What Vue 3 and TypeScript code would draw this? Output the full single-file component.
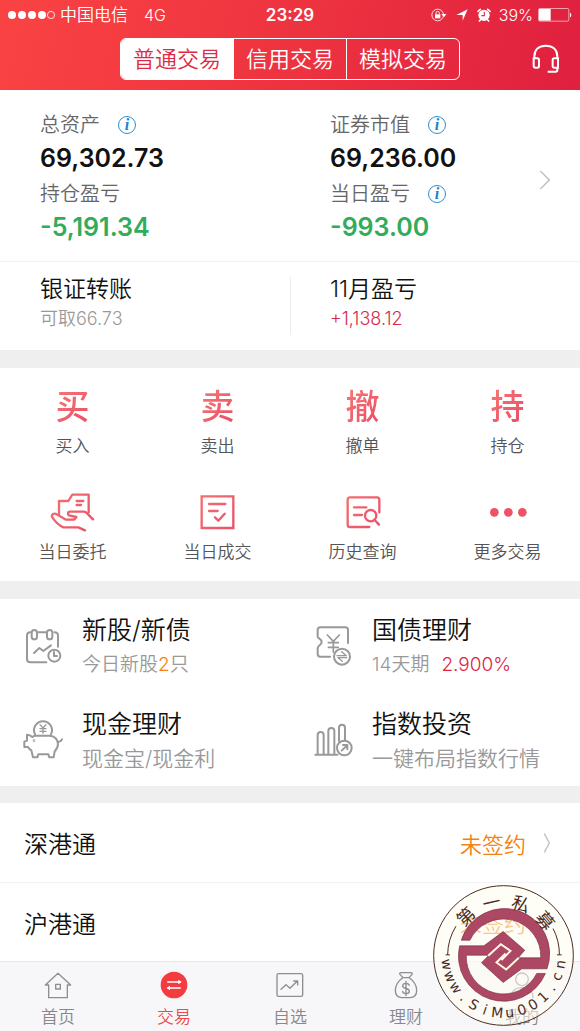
<script setup lang="ts">
import { ref } from 'vue'

const modes = ['普通交易', '信用交易', '模拟交易']
const activeMode = ref(0)

interface Stat { label: string; value: string; down?: boolean; info?: boolean }
const stats: Stat[][] = [
  [
    { label: '总资产', value: '69,302.73', info: true },
    { label: '持仓盈亏', value: '-5,191.34', down: true },
  ],
  [
    { label: '证券市值', value: '69,236.00', info: true },
    { label: '当日盈亏', value: '-993.00', down: true, info: true },
  ],
]

const actions = [
  { glyph: '买', label: '买入' },
  { glyph: '卖', label: '卖出' },
  { glyph: '撤', label: '撤单' },
  { glyph: '持', label: '持仓' },
  { icon: 'hand', label: '当日委托' },
  { icon: 'deal', label: '当日成交' },
  { icon: 'history', label: '历史查询' },
  { icon: 'more', label: '更多交易' },
]

const products = [
  { icon: 'calendar', title: '新股/新债', before: '今日新股', mark: '2', tone: 'orange', after: '只' },
  { icon: 'bond', title: '国债理财', before: '14天期', mark: '2.900%', tone: 'red', after: '' },
  { icon: 'piggy', title: '现金理财', before: '现金宝/现金利', mark: '', tone: '', after: '' },
  { icon: 'bars', title: '指数投资', before: '一键布局指数行情', mark: '', tone: '', after: '' },
]

const links = ['深港通', '沪港通']

const tabs = [
  { icon: 'home', label: '首页' },
  { icon: 'trade', label: '交易' },
  { icon: 'watch', label: '自选' },
  { icon: 'money', label: '理财' },
  { icon: 'me', label: '我的' },
]
const activeTab = ref(1)

interface Glyph { ch: string; x: number; y: number; turn: number }
function ring(text: string, radius: number, from: number, to: number, inward: boolean): Glyph[] {
  const chars = [...text]
  return chars.map((ch, i) => {
    const deg = from + ((to - from) * i) / (chars.length - 1)
    const rad = (deg * Math.PI) / 180
    return {
      ch,
      x: 251 + radius * Math.sin(rad),
      y: 256 - radius * Math.cos(rad),
      turn: inward ? deg - 180 : deg,
    }
  })
}
const sealTop = ring('第一私募', 167, -44, 50, false)
const sealBottom = ring('www.SiMu001.cn', 187, 261, 99, true)
</script>

<template>
  <div class="page">
    <header class="top">
      <div class="status">
        <div class="carrier">
          <svg class="signal" viewBox="0 0 48 10" aria-hidden="true">
            <circle v-for="n in 4" :key="n" :cx="n * 10 - 6" cy="5" r="4" fill="#fff" />
            <circle cx="43" cy="5" r="3.6" fill="none" stroke="#fff" stroke-width=".8" />
          </svg>
          <span>中国电信</span>
          <span class="net">4G</span>
        </div>
        <strong class="clock">23:29</strong>
        <div class="indicators">
          <svg class="lock" viewBox="0 0 48 42" aria-hidden="true">
            <circle cx="20" cy="21" r="17.5" fill="none" stroke="#fff" stroke-width="2.5" />
            <path d="M31 18h15l-7 10z" fill="#fff" />
            <rect x="12" y="19" width="16" height="12" fill="#fff" />
            <path d="M15 20v-5a5 5 0 0 1 10 0v5" fill="none" stroke="#fff" stroke-width="2.5" />
          </svg>
          <svg class="arrow" viewBox="0 0 36 36" aria-hidden="true"><path d="M35 1 20 35V18H1z" fill="#fff" /></svg>
          <svg class="alarm" viewBox="0 0 42 42" aria-hidden="true">
            <circle cx="21" cy="22" r="17" fill="#fff" />
            <path d="M3 10 10 4M39 10 32 4M10 36l-3 3M32 36l3 3" stroke="#fff" stroke-width="5" stroke-linecap="round" />
            <path d="M22 12v11h-9" fill="none" stroke="#e93143" stroke-width="3.5" />
          </svg>
          <span>39%</span>
          <svg class="battery" viewBox="0 0 102 42" aria-hidden="true">
            <rect x="1.5" y="1.5" width="91" height="38" rx="4" fill="none" stroke="#fff" stroke-opacity=".7" stroke-width="2.5" />
            <rect x="3" y="3" width="35" height="35" fill="#fff" />
            <path d="M96 14c5 2 5 12 0 14z" fill="#fff" />
          </svg>
        </div>
      </div>
      <div class="bar">
        <div class="segments">
          <button v-for="(m, i) in modes" :key="m" type="button" :class="{ on: i === activeMode }" @click="activeMode = i">{{ m }}</button>
        </div>
        <button class="service" type="button" aria-label="客服">
          <svg viewBox="0 0 84 90" fill="none" stroke="#fff" stroke-width="6" aria-hidden="true">
            <path d="M7 43V38C7 17 21 5 41.500 5S76 17 76 38v5" />
            <path d="M5 43h11q5 0 5 5v18q0 5-5 5h-5q-6 0-6-6zM78 43H67q-5 0-5 5v18q0 5 5 5h11z" />
            <path d="M76 70v8q0 5-5 5H47" />
          </svg>
        </button>
      </div>
    </header>

    <main>
      <section class="assets">
        <div v-for="(col, c) in stats" :key="c" class="column">
          <div v-for="s in col" :key="s.label" class="stat">
            <div class="name">
              <span>{{ s.label }}</span>
              <button v-if="s.info" class="info" type="button" :aria-label="s.label + '说明'">i</button>
            </div>
            <div class="value" :class="{ down: s.down }">{{ s.value }}</div>
          </div>
        </div>
        <svg class="chevron" viewBox="0 0 36 60" aria-hidden="true"><path d="M4 3l27 27L4 57" fill="none" stroke="#c4c4c4" stroke-width="5" /></svg>
      </section>

      <section class="summary">
        <div class="cell">
          <div class="head">银证转账</div>
          <div class="note">可取66.73</div>
        </div>
        <div class="cell">
          <div class="head">11月盈亏</div>
          <div class="note up">+1,138.12</div>
        </div>
      </section>

      <section class="actions">
        <button v-for="a in actions" :key="a.label" class="action" type="button">
          <span v-if="a.glyph" class="glyph">{{ a.glyph }}</span>
          <svg v-else class="pic" viewBox="0 0 135 120" fill="none" stroke="url(#rose)" stroke-width="7" stroke-linejoin="round" stroke-linecap="round" aria-hidden="true">
            <defs>
              <linearGradient id="rose" gradientUnits="userSpaceOnUse" x1="10" y1="10" x2="125" y2="110">
                <stop offset="0" stop-color="#f5706f" /><stop offset="1" stop-color="#e8506a" />
              </linearGradient>
            </defs>
            <template v-if="a.icon === 'hand'">
              <path d="M27 67V27h28L67 8h49v53" />
              <path d="M80 27h20M80 39h13" />
              <path d="M129 82 109 62q-3-3-8-3H60c-8 0-8 10 0 12l19 4-6 8H48L20 67c-9-6-17 2-13 9 8 12 20 24 33 30h45l20 9" />
            </template>
            <template v-else-if="a.icon === 'deal'">
              <path d="M20 13h95v95H20z" stroke-linejoin="miter" />
              <path d="M42 36h49M42 57h26M60 76l10 10 19-21" />
            </template>
            <template v-else-if="a.icon === 'history'">
              <path d="M118 61V23q0-7-7-7H30q-7 0-7 7v75q0 7 7 7h58" />
              <path d="M42 46h37M42 69h24" />
              <circle cx="92" cy="71" r="17" /><path d="m104 84 13 14" />
            </template>
            <g v-else stroke="none" fill="#ee5265">
              <circle cx="28" cy="61" r="13" /><circle cx="70" cy="61" r="13" /><circle cx="112" cy="61" r="13" />
            </g>
          </svg>
          <span class="caption">{{ a.label }}</span>
        </button>
      </section>

      <section class="products">
        <a v-for="p in products" :key="p.title" class="product" href="#">
          <svg class="emblem" viewBox="0 0 120 126" fill="none" stroke="#999" stroke-width="6" stroke-linecap="round" stroke-linejoin="round" aria-hidden="true">
            <template v-if="p.icon === 'calendar'">
              <path d="M22 25q-10 0-10 10v70q0 10 10 10h48M46 25h24M94 25q11 0 11 10v33" />
              <rect x="26" y="18" width="16" height="28" rx="8" /><rect x="72" y="18" width="16" height="28" rx="8" />
              <path d="m33 87 16-15 12 9 23-17" />
              <circle cx="94" cy="95" r="18" /><path d="M93 84v12h9" />
            </template>
            <template v-else-if="p.icon === 'bond'">
              <path d="M105 57V18q0-8-8-8H22q-8 0-8 8v20c0 5 12 6 12 16s-12 11-12 18v18q0 8 8 8h29" />
              <path d="m43 33 18 19 18-19M61 52v33M46 56h30M46 70h30" stroke-width="5" />
              <circle cx="87" cy="98" r="24" /><path d="M72 95h28l-14-12M101 101H75l13 11" stroke-width="4" />
            </template>
            <template v-else-if="p.icon === 'piggy'">
              <path d="M36 49A27 27 0 1 1 84 49" />
              <path d="m51 20 9 10 9-10M60 30v16M51 32h18M51 40h18" stroke-width="4" />
              <path d="M37 53h42c16 0 26 12 26 25 0 11-5 17-10 22l-3 18H79l-3-9H46l-3 9H30l-5-21c-5-3-8-6-10-10H4V71l8-3V50c8 0 12 3 16 7 3-3 5-4 9-4z" />
              <path d="M105 72q9-1 12-8" /><circle cx="33" cy="68" r="1" />
            </template>
            <template v-else>
              <path d="M7 110h66M14 110V51q0-9 9-9t9 9v59M46 110V39q0-9 9-9t9 9v71M78 69V29q0-9 9-9t9 9v37" />
              <circle cx="94" cy="90" r="22" /><path d="m86 98 16-16M90 81h13v13" />
            </template>
          </svg>
          <div class="copy">
            <div class="title">{{ p.title }}</div>
            <div class="detail" :class="{ figures: p.mark, spaced: p.tone === 'red' }"><span>{{ p.before }}</span><span v-if="p.mark" :class="p.tone">{{ p.mark }}</span><span v-if="p.after">{{ p.after }}</span></div>
          </div>
        </a>
      </section>

      <nav class="links">
        <a v-for="l in links" :key="l" class="link" href="#">
          <span>{{ l }}</span>
          <span class="state">未签约</span>
          <svg class="tip" viewBox="0 0 24 60" aria-hidden="true"><path d="m4 2 15 28L4 58" fill="none" stroke="#c0c0c0" stroke-width="4" /></svg>
        </a>
      </nav>
    </main>

    <nav class="tabs">
      <button v-for="(t, i) in tabs" :key="t.label" type="button" :class="{ current: i === activeTab }" @click="activeTab = i">
        <svg viewBox="0 0 90 84" fill="none" stroke="#8e8e8e" stroke-width="4" stroke-linejoin="round" stroke-linecap="round" aria-hidden="true">
          <template v-if="t.icon === 'home'">
            <path d="M17 43v37h56V43M7 42 45 7l38 35H73M7 42h10" /><path d="M38 40h14v14H38z" />
          </template>
          <template v-else-if="t.icon === 'trade'">
            <circle cx="45" cy="42" r="40" fill="#f43c40" stroke="none" />
            <path d="M26 33h38M64 51H27" stroke="#fff" />
            <path d="m58 26 10 7-10 7zM33 44l-10 7 10 7z" fill="#fff" stroke="none" />
          </template>
          <template v-else-if="t.icon === 'watch'">
            <rect x="6" y="8" width="77" height="68" rx="5" />
            <path d="m18 55 15-14 12 11 22-22M56 30h12v12" />
          </template>
          <template v-else-if="t.icon === 'money'">
            <path d="M36 20 27 10q-3-5 4-5h28q7 0 4 5l-9 10zM35 20C20 31 13 47 13 58c0 14 8 22 20 22h24c12 0 20-8 20-22 0-11-7-27-22-38" />
            <path d="M55 43c-2-5-6-6-10-6-6 0-10 3-10 8 0 10 20 5 20 15 0 5-4 8-10 8s-10-3-10-7M45 31v43" />
          </template>
          <template v-else>
            <circle cx="45" cy="25" r="19" /><path d="M12 80c1-22 14-30 33-30s32 8 33 30" />
          </template>
        </svg>
        <span>{{ t.label }}</span>
      </button>
    </nav>

    <svg class="seal" viewBox="39 44 424 424" role="img" aria-label="第一私募 www.SiMu001.cn">
      <circle cx="251" cy="256" r="210" fill="#fffeee" fill-opacity=".55" stroke="#4b2a1f" stroke-width="3" />
      <path d="M77 254h13M83 254A168 168 0 0 1 108 168M400 175A168 168 0 0 1 419 254M412 254h14" fill="none" stroke="#4b2a1f" stroke-width="3" />
      <path
        d="M124 210A136 136 0 1 1 382 296H306L250 337 185 278 207 255H139A112 112 0 0 0 351 310H377A136 136 0 0 1 119 227H192L250 184 315 240 295 263H363A112 112 0 0 0 150 210Z"
        fill="#ac4863" stroke="#7c2f47" stroke-width="2"
      />
      <path d="M205 257 243 222 272 242 245 270M297 263 259 298 230 277 257 250" fill="none" stroke="#fff8e4" stroke-width="6" />
      <g class="seal-cn">
        <text v-for="(g, i) in sealTop" :key="i" :x="g.x" :y="g.y" :transform="`rotate(${g.turn} ${g.x} ${g.y})`" text-anchor="middle" dominant-baseline="central">{{ g.ch }}</text>
      </g>
      <g class="seal-url">
        <text v-for="(g, i) in sealBottom" :key="i" :x="g.x" :y="g.y" :transform="`rotate(${g.turn} ${g.x} ${g.y})`" text-anchor="middle">{{ g.ch }}</text>
      </g>
    </svg>
  </div>
</template>

<style>
body { margin: 0; background: #efefef; }
</style>

<style scoped>
.page {
  position: relative;
  display: flex;
  flex-direction: column;
  min-height: 100vh;
  font-family: Inter, "Noto Sans CJK SC", sans-serif;
  font-weight: 350;
  color: #111;
}
button { margin: 0; padding: 0; border: 0; background: none; font: inherit; color: inherit; cursor: pointer; }
a { color: inherit; text-decoration: none; }
svg { display: block; flex: none; }

.top {
  height: 90px;
  background: linear-gradient(105deg, #f94343 0%, #ee3340 50%, #df203f 100%);
  color: #fff;
}
.status {
  display: grid;
  grid-template-columns: 1fr auto 1fr;
  align-items: center;
  height: 30px;
  padding: 0 8px;
  font-size: 17px;
}
.carrier, .indicators { display: flex; align-items: center; line-height: 20px; }
.signal { width: 48px; height: 10px; margin-right: 4px; }
.net { margin-left: 16px; font-size: 16px; }
.clock { font-size: 17px; font-weight: 600; }
.indicators { justify-content: flex-end; font-size: 16px; }
.lock { width: 16px; height: 14px; margin-right: 9px; }
.arrow { width: 12px; height: 12px; margin-right: 9px; }
.alarm { width: 14px; height: 14px; margin-right: 8px; }
.battery { width: 34px; height: 14px; margin-left: 5px; }
.bar {
  display: grid;
  grid-template-columns: 1fr auto 1fr;
  align-items: center;
  padding: 8px 20px 0;
}
.segments {
  grid-column: 2;
  display: flex;
  overflow: hidden;
  box-sizing: border-box;
  width: 340px;
  height: 42px;
  border: 1px solid #fff;
  border-radius: 6px;
}
.segments button { flex: 1; font-size: 22px; line-height: 40px; }
.segments button + button { border-left: 1px solid #fff; }
.segments .on { background: #fff; color: #dd2d44; }
.service { justify-self: end; }
.service svg { width: 28px; height: 30px; }

.assets {
  position: relative;
  display: grid;
  grid-template-columns: 1fr 1fr;
  padding: 18px 0 16px;
  background: #fff;
  border-bottom: 1px solid #f2f2f2;
}
.column { padding-left: 40px; }
.name { display: flex; align-items: center; gap: 18px; height: 33px; font-size: 20px; line-height: 32px; color: #666; }
.info {
  box-sizing: border-box;
  width: 18px;
  height: 18px;
  border: 1px solid #2d8fd2;
  border-radius: 50%;
  font: italic bold 16px/15px "Liberation Serif", serif;
  color: #1c82cc;
}
.value { height: 35px; font-size: 25px; line-height: 35px; font-weight: 600; }
.stat + .stat { margin-top: 1px; }
.down { color: #31ac5b; }
.chevron { position: absolute; right: 29px; top: 80px; width: 12px; height: 20px; }

.summary { display: grid; grid-template-columns: 1fr 1fr; padding: 15px 0; background: #fff; }
.cell { padding-left: 40px; height: 58px; }
.cell + .cell { border-left: 1px solid #ececec; padding-left: 39px; }
.head { font-size: 23px; line-height: 24px; }
.note { margin-top: 6px; font-size: 18px; line-height: 24px; color: #999; }
.note.up { color: #d62a4c; }

.actions {
  display: grid;
  grid-template-columns: repeat(4, 1fr);
  row-gap: 31px;
  margin-top: 18px;
  padding: 18px 0 14px;
  background: #fff;
}
.action { display: flex; flex-direction: column; align-items: center; height: 75px; }
.glyph {
  height: 42px;
  font-size: 34px;
  line-height: 42px;
  font-weight: 500;
  background: linear-gradient(135deg, #f77974, #e84a66);
  -webkit-background-clip: text;
  background-clip: text;
  color: transparent;
}
.pic { width: 45px; height: 40px; margin-bottom: 2px; }
.caption { margin-top: 6px; font-size: 17px; line-height: 24px; color: #555; }

.products {
  display: grid;
  grid-template-columns: 1fr 1fr;
  row-gap: 25px;
  margin-top: 18px;
  padding: 14px 0 10px;
  background: #fff;
}
.product { display: flex; align-items: center; padding-left: 23px; }
.emblem { width: 40px; height: 42px; margin: 0 19px 6px 0; }
.title { font-size: 25px; line-height: 34px; }
.detail { height: 35px; font-size: 21px; line-height: 35px; color: #999; white-space: nowrap; }
.figures { font-size: 19px; }
.spaced { display: flex; gap: 12px; }
.orange { color: #f5820f; }
.red { color: #dc2444; }

.links { margin-top: 17px; background: #fff; }
.link { display: flex; align-items: center; box-sizing: border-box; height: 79px; padding: 0 29px 0 24px; font-size: 24px; }
.link + .link { border-top: 1px solid #f2f2f2; }
.state { margin-left: auto; font-size: 22px; color: #f5820f; }
.tip { width: 8px; height: 20px; margin-left: 17px; }

.tabs {
  display: grid;
  grid-template-columns: repeat(5, 1fr);
  margin-top: auto;
  height: 69px;
  background: #f7f7fa;
  border-top: 1px solid #e6e6e8;
}
.tabs button { display: flex; flex-direction: column; align-items: center; padding-top: 9px; font-size: 17px; line-height: 24px; color: #888; }
.tabs svg { width: 30px; height: 28px; margin-bottom: 6px; }
.tabs .current { color: #f04848; }

.seal { position: absolute; right: 6px; bottom: 5px; width: 141px; height: 141px; pointer-events: none; }
.seal text { fill: #4b2a1f; }
.seal-cn { font-family: "Noto Sans CJK SC", sans-serif; font-size: 54px; font-weight: 400; }
.seal-url { font-family: "DejaVu Sans", sans-serif; font-size: 42px; font-weight: 400; }
</style>
